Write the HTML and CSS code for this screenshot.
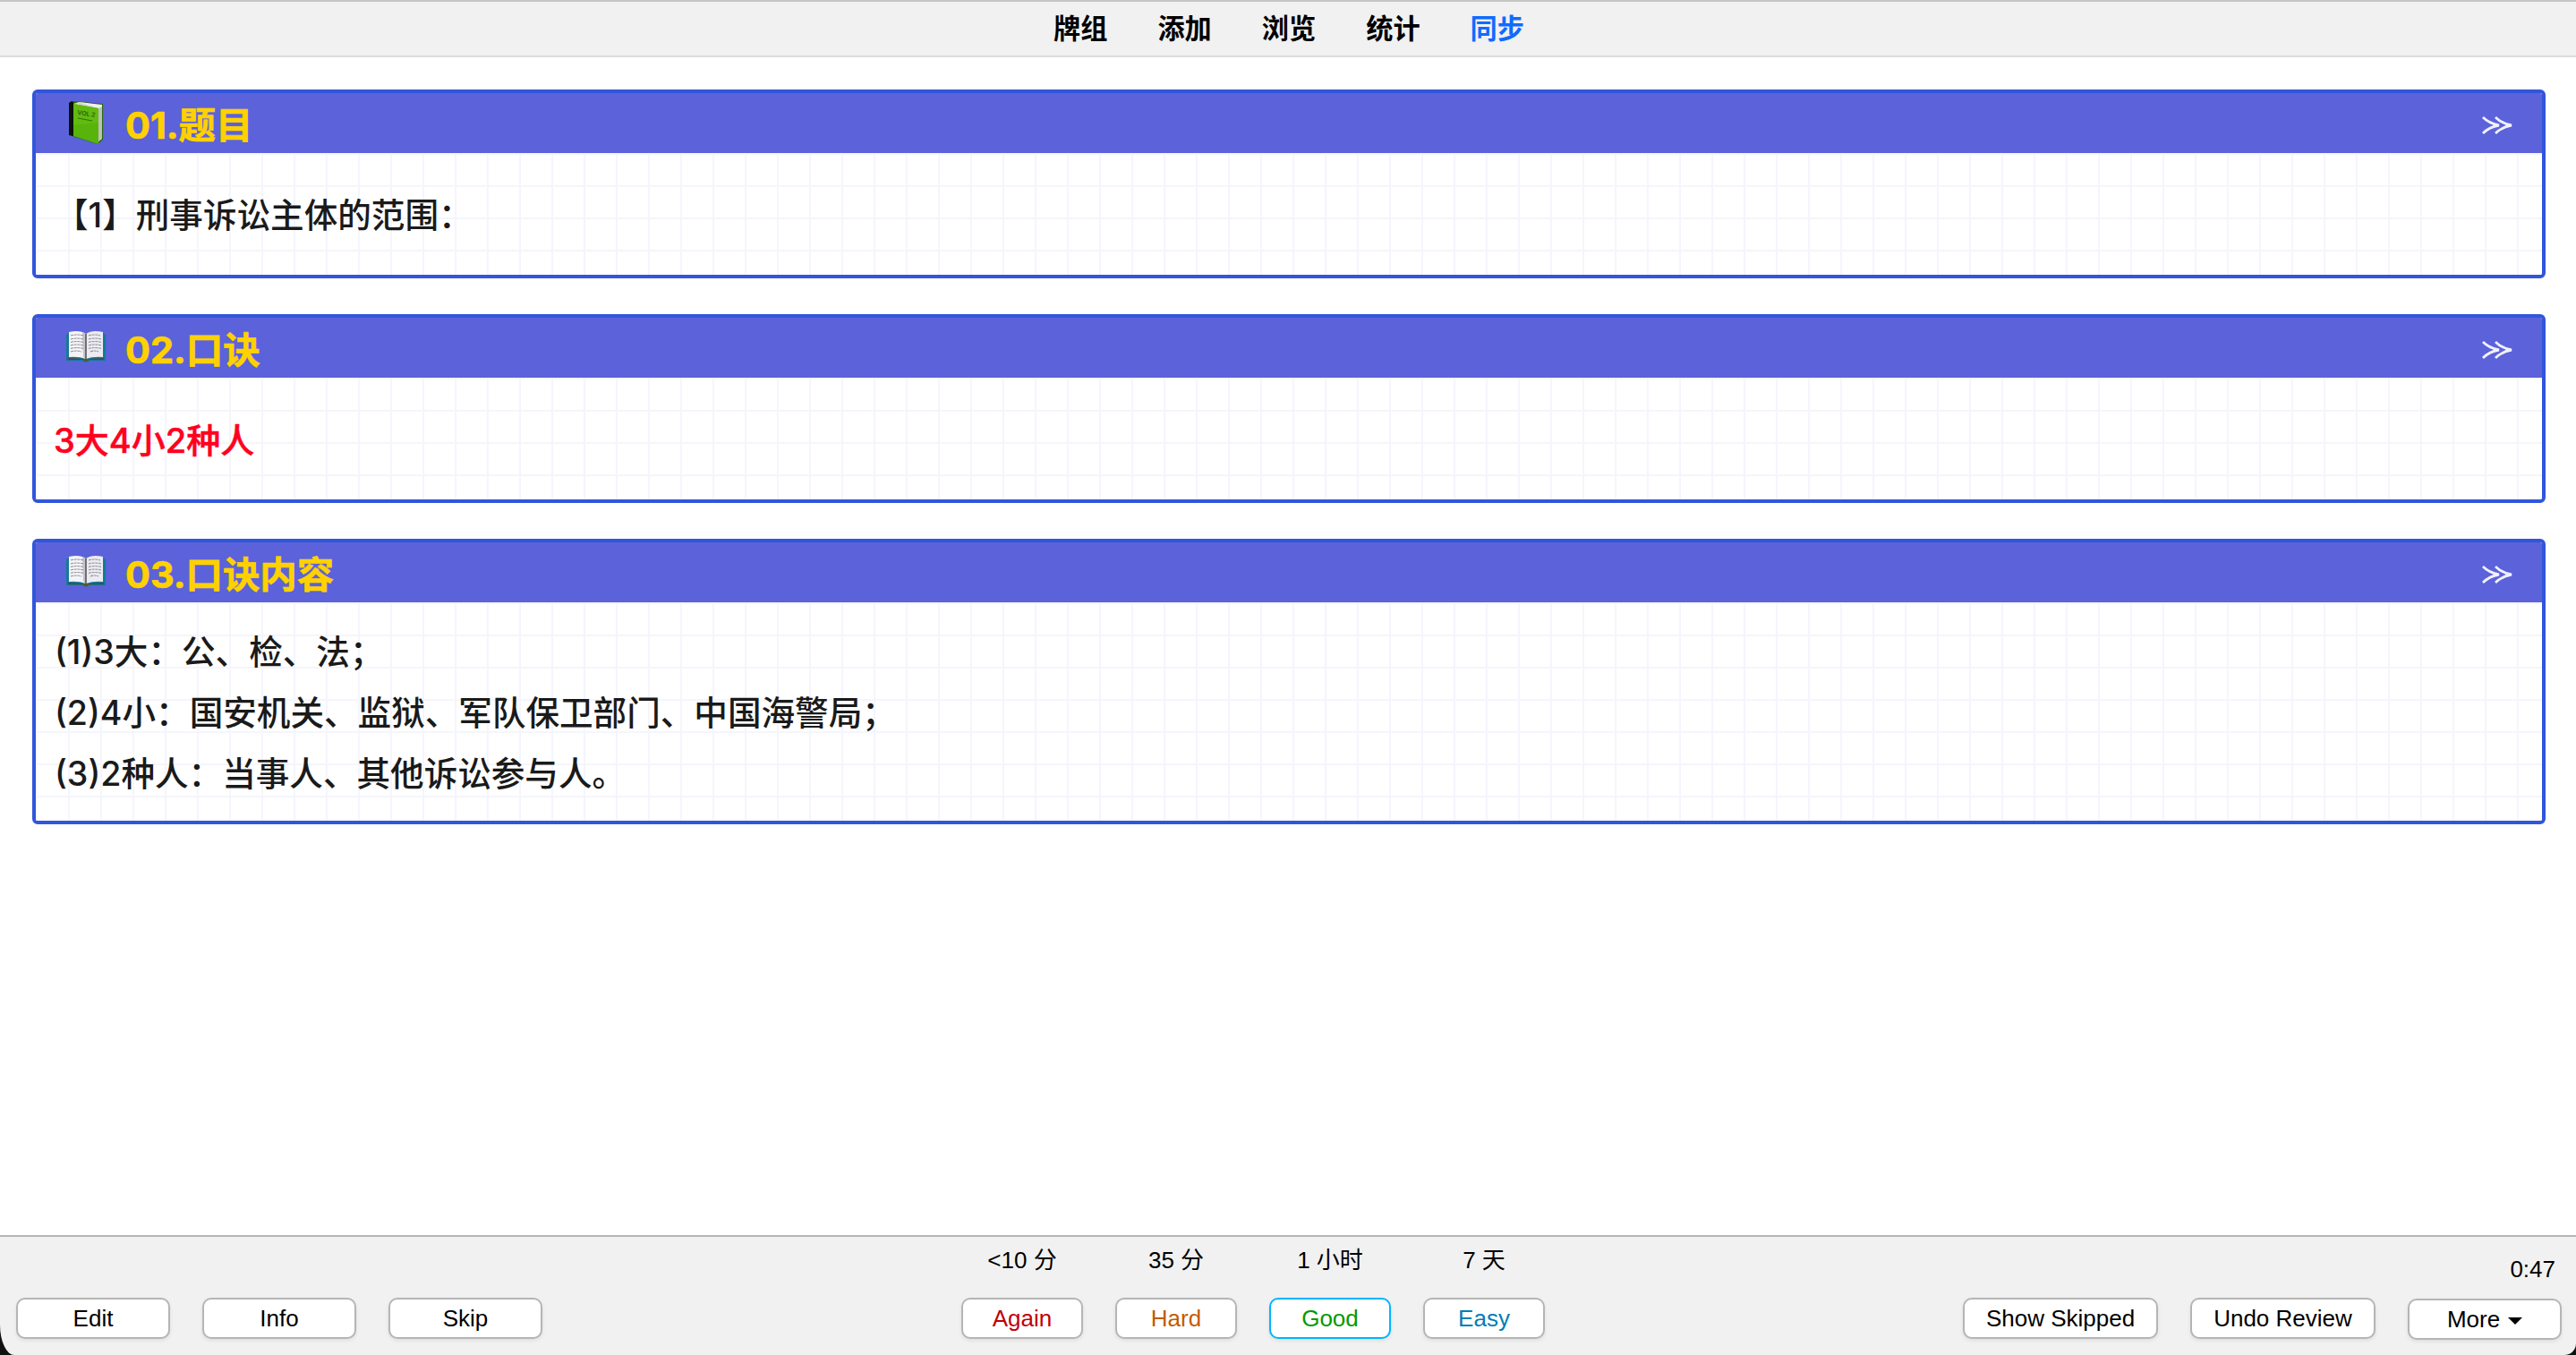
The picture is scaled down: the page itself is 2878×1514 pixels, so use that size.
FILE: index.html
```html
<!DOCTYPE html>
<html lang="zh-CN">
<head>
<meta charset="UTF-8" />
<meta name="viewport" content="width=device-width, initial-scale=1" />
<title>Anki</title>
<link rel="stylesheet" href="styles.css">
</head>
<body>

<!-- shared icons -->
<svg class="defs" width="0" height="0">
  <symbol id="open-book" viewBox="0 0 44 36">
    <path d="M0 5 L3 3 L41 3 L44 5 V34 H26 L22 36 L18 34 H0Z" fill="#147a98"/>
    <path d="M2 31 L20 32 H24 L42 31 V33 H25 L22 35 L19 33 H2Z" fill="#4a4a48"/>
    <path d="M3 2 Q15-1 22 4 V32 Q14 29 3 30Z" fill="#f4f3f7"/>
    <path d="M41 2 Q29-1 22 4 V32 Q30 29 41 30Z" fill="#ecebf2"/>
    <path d="M18 2 L22 4 V32 L19 30Z" fill="#c4c4ca"/>
    <path d="M22 4 V32" stroke="#55555a" stroke-width="1.6"/>
    <path d="M5 6Q12 4 19 6M5 10Q12 8 19 10M5 13.500Q12 11.500 19 13.500M5 17Q12 15 19 17M5 20.500Q12 18.500 19 20.500M5 24Q12 22 17 24M25 6Q32 4 38 6M25 10Q32 8 39 10M25 13.500Q32 11.500 39 13.500M25 17Q32 15 39 17M25 20.500Q32 18.500 39 20.500M27 24Q32 22 36 24" fill="none" stroke="#8f8f98" stroke-width="1.1" stroke-dasharray="3 .7"/>
    <path d="M18 32 H26 L24 35 H20Z" fill="#5d5a20"/>
  </symbol>
  <symbol id="fold" viewBox="0 0 34 22">
    <path d="M1 2 Q8 9 19 11 Q8 13 1 20 M15 2 Q22 9 33 11 Q22 13 15 20" fill="none" stroke="#f1f0fd" stroke-width="2.800"/>
  </symbol>
</svg>

<nav class="toolbar">
  <a>牌组</a>
  <a>添加</a>
  <a>浏览</a>
  <a>统计</a>
  <a class="sync">同步</a>
</nav>

<main class="cards">
  <section class="card">
    <header class="card-header">
      <svg class="icon" viewBox="0 0 44 50">
        <path d="M3 3 L8 1 L41 4 L41 44 L35 49 L6 40 L3 39Z" fill="#276b0e"/>
        <path d="M3 3 L6 1 L8 2 V40 L3 39Z" fill="#0b1409"/>
        <path d="M8 4 L14 2 L40 6 V43 L35 47Z" fill="#d9d9d5"/>
        <path d="M14 2 L40 5 L40 7 L35 9Z" fill="#f0f0ec"/>
        <path d="M37 9 V45 M39 8 V43" stroke="#9b9b96" stroke-width=".8"/>
        <path d="M8 4 L36 9 V49 L8 40Z" fill="#58b30b"/>
        <path d="M8 4 L36 9 V25 L8 28Z" fill="#62bb0f"/>
        <path d="M13 20 L29 23" stroke="#2f6d0a" stroke-width="1"/>
        <text class="volume" x="12" y="16" transform="rotate(8 12 16)">VOL 2</text>
      </svg>
      <h2>01.题目</h2>
      <svg class="fold"><use href="#fold"/></svg>
    </header>
    <div class="card-body single">【1】刑事诉讼主体的范围：</div>
  </section>

  <section class="card">
    <header class="card-header">
      <svg class="icon open"><use href="#open-book"/></svg>
      <h2>02.口诀</h2>
      <svg class="fold"><use href="#fold"/></svg>
    </header>
    <div class="card-body single key">3大4小2种人</div>
  </section>

  <section class="card">
    <header class="card-header">
      <svg class="icon open"><use href="#open-book"/></svg>
      <h2>03.口诀内容</h2>
      <svg class="fold"><use href="#fold"/></svg>
    </header>
    <div class="card-body">
      <p>(1)3大：公、检、法；</p>
      <p>(2)4小：国安机关、监狱、军队保卫部门、中国海警局；</p>
      <p>(3)2种人：当事人、其他诉讼参与人。</p>
    </div>
  </section>
</main>

<footer class="bottom">
  <div class="group left">
    <button>Edit</button>
    <button>Info</button>
    <button>Skip</button>
  </div>
  <div class="group answers">
    <div class="answer"><span>&lt;10 分</span><button class="again">Again</button></div>
    <div class="answer"><span>35 分</span><button class="hard">Hard</button></div>
    <div class="answer"><span>1 小时</span><button class="good">Good</button></div>
    <div class="answer"><span>7 天</span><button class="easy">Easy</button></div>
  </div>
  <div class="group right">
    <button class="skipped">Show Skipped</button>
    <button class="undo">Undo Review</button>
    <div class="more-col">
      <span class="timer">0:47</span>
      <button class="more">More <i class="caret"></i></button>
    </div>
  </div>
</footer>

</body>
</html>
```
FILE: styles.css
```css
* {
  margin: 0;
  padding: 0;
  box-sizing: border-box;
}
html {
  background: #111;
}
body {
  height: 1514px;
  display: flex;
  flex-direction: column;
  overflow: hidden;
  font-family: Inter, "Noto Sans CJK SC", sans-serif;
}
.defs {
  position: absolute;
}

/* top toolbar */
.toolbar {
  height: 64px;
  flex: none;
  display: flex;
  justify-content: center;
  gap: 56px;
  padding-left: 2px;
  background: #f1f1f1;
  border-top: 2px solid #c4c4c4;
  border-bottom: 2px solid #dcdcdc;
  font-size: 30.2px;
  font-weight: 700;
  line-height: 60px;
}
.toolbar .sync {
  color: #106bff;
}

/* note cards */
.cards {
  flex: 1;
  background: #fff;
  padding: 36px 34px 0 36px;
  display: flex;
  flex-direction: column;
  gap: 40px;
}
.card {
  border: 4px solid #3156db;
  border-radius: 6px;
  overflow: hidden;
}
.card-header {
  height: 67px;
  background: #5b62da;
  display: flex;
  align-items: center;
  padding: 0 33px 0 34px;
}
.icon {
  width: 44px;
  height: 50px;
  margin-bottom: 2px;
}
.icon.open {
  height: 36px;
  margin-bottom: 4px;
}
.volume {
  font: 700 7px Inter, sans-serif;
  fill: #2f6d0a;
}
.card h2 {
  flex: 1;
  margin-left: 22px;
  padding-top: 5px;
  color: #ffd100;
  font-size: 41.4px;
  line-height: 60px;
  font-weight: 700;
  -webkit-text-stroke: 0.7px #ffd100;
}
.fold {
  width: 34px;
  height: 22px;
  margin-top: 4px;
}
.card-body {
  padding: 22px 21px 18px;
  color: #1a1a1a;
  font-size: 37.6px;
  font-weight: 500;
  line-height: 68px;
  background-color: #fff;
  background-image:
    linear-gradient(#f5f5fd 2px, transparent 2px),
    linear-gradient(90deg, #f5f5fd 2px, transparent 2px);
  background-size: 36px 36px;
}
.card-body.single {
  padding: 36px 21px 32px;
}
.card-body.key {
  padding-left: 20px;
  color: #ff001e;
  font-size: 38px;
  -webkit-text-stroke: 0.5px #ff001e;
}

/* answer bar */
.bottom {
  height: 134px;
  flex: none;
  display: grid;
  grid-template-columns: 1056px auto 1fr;
  align-items: end;
  padding: 0 16px 18px 18px;
  background: #f1f1f1;
  border-top: 2px solid #b5b5b5;
  border-radius: 0 0 13px 16px / 0 0 13px 34px;
  font-family: "Liberation Sans", "Noto Sans CJK SC", sans-serif;
  font-size: 26px;
}
.group {
  display: flex;
  align-items: flex-end;
  gap: 36px;
}
.group.right {
  justify-content: flex-end;
}
button {
  width: 172px;
  height: 46px;
  font: inherit;
  color: #000;
  background: #fff;
  border: 2px solid #b5b5b5;
  border-radius: 10px;
  box-shadow: 0 2px 4px rgba(0, 0, 0, 0.08);
}
.answer {
  display: flex;
  flex-direction: column;
  align-items: center;
  gap: 24px;
}
.answer span {
  line-height: 36px;
}
.answer button {
  width: 136px;
}
.again { color: #c00008; }
.hard { color: #c25b00; }
.answer .good {
  color: #009b00;
  border-color: #00b4ff;
}
.easy { color: #007db5; }
.skipped { width: 218px; }
.undo { width: 207px; }
.more-col {
  display: flex;
  flex-direction: column;
  align-items: flex-end;
  gap: 17px;
  margin-bottom: -1px;
}
.timer {
  margin-right: 7px;
  line-height: 32px;
}
.more {
  display: flex;
  align-items: center;
  justify-content: center;
  gap: 9px;
}
.caret {
  border: 8px solid transparent;
  border-top-color: #000;
  border-bottom: 0;
  margin-top: 3px;
}
```
